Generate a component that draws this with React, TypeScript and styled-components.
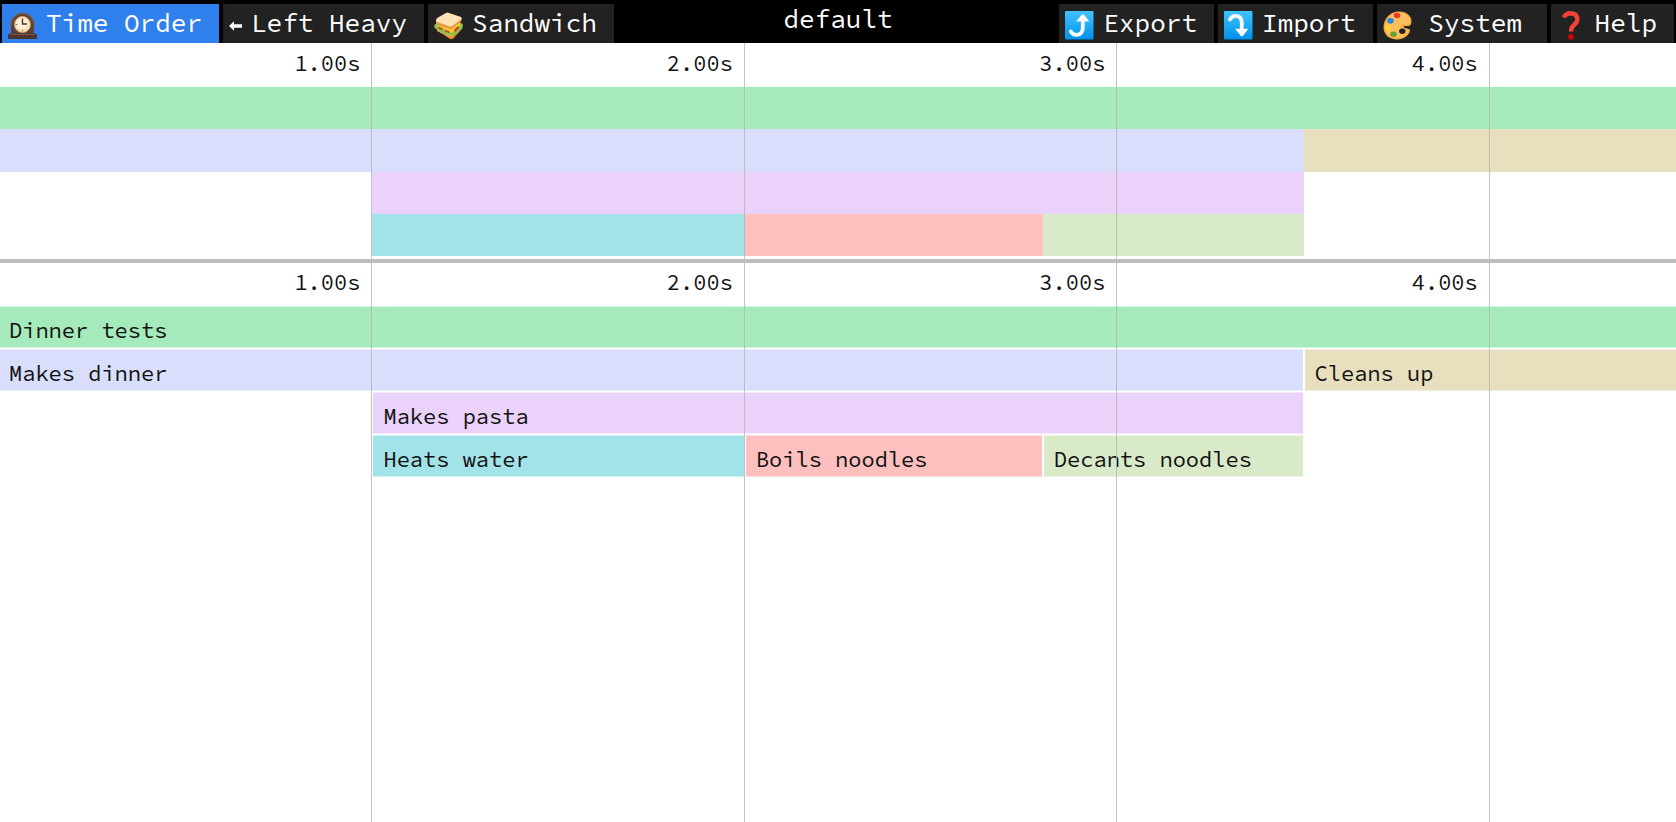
import React from "react";
import styled, { createGlobalStyle } from "styled-components";

const GlobalStyle = createGlobalStyle`
  * { box-sizing: border-box; }
  body {
    margin: 0;
    background: #fff;
    font-family: "Source Code Pro", "Noto Sans Mono", "Liberation Mono", monospace;
  }
`;

const Page = styled.div`
  display: flex;
  flex-direction: column;
  min-height: 100vh;
`;

const Toolbar = styled.header`
  display: grid;
  grid-template-columns: 1fr auto 1fr;
  padding: 0 2px;
  background: #000;
  color: #fff;
`;

const ToolGroup = styled.nav<{ $end?: boolean }>`
  display: flex;
  gap: 4px;
  padding-top: 4px;
  justify-content: ${(p) => (p.$end ? "flex-end" : "flex-start")};
`;

const Title = styled.h1`
  margin: 0;
  font-size: 26px;
  font-weight: 400;
  line-height: 38px;
`;

const ToolButton = styled.button<{ $active?: boolean; $wide?: boolean }>`
  display: flex;
  align-items: center;
  gap: 9px;
  height: 39px;
  min-width: ${(p) => (p.$wide ? "170px" : "0")};
  padding: 0 17px 2px 6px;
  border: 0;
  background: ${(p) => (p.$active ? "#2f80ed" : "#222")};
  color: #fff;
  font: inherit;
  font-size: 26px;
  line-height: 36px;
  white-space: nowrap;
  cursor: pointer;
  svg { flex: none; margin-top: 6px; }
`;

const ButtonLabel = styled.span`
  flex: 1;
  text-align: center;
`;

const Panel = styled.section<{ $fill?: boolean }>`
  position: relative;
  flex: ${(p) => (p.$fill ? "1" : "none")};
  padding: ${(p) => (p.$fill ? "43px 0 0" : "44px 0 3px")};
  border-bottom: ${(p) => (p.$fill ? "0" : "4px solid #bdbdbd")};
`;

const Axis = styled.div`
  position: absolute;
  inset: 0;
  display: grid;
  grid-template-columns: repeat(4, 2fr) 1fr;
  pointer-events: none;
`;

const Tick = styled.div<{ $detail?: boolean }>`
  padding: ${(p) => (p.$detail ? "3px" : "4px")} 11px 0 0;
  border-right: 1px solid rgba(180, 180, 180, 0.8);
  color: #111;
  font-size: 22px;
  line-height: 32px;
  text-align: right;
`;

const Rows = styled.div<{ $detail?: boolean }>`
  display: grid;
  grid-auto-rows: minmax(0, 1fr);
  height: ${(p) => (p.$detail ? "172px" : "169px")};
`;

const Row = styled.div<{ $detail?: boolean }>`
  display: flex;
  padding-bottom: ${(p) => (p.$detail ? "1px" : "0")};
`;

const Frame = styled.div<{ $color: string; $detail?: boolean; $first?: boolean; $last?: boolean }>`
  flex: none;
  overflow: hidden;
  padding-left: ${(p) => (p.$first ? "9px" : "10px")};
  border-style: solid;
  border-color: rgba(255, 255, 255, 0.5) #fff;
  border-top-width: ${(p) => (p.$detail ? "1px" : "0")};
  border-bottom-width: ${(p) => (p.$detail ? "1px" : "0")};
  border-left-width: ${(p) => (p.$detail && !p.$first ? "1px" : "0")};
  border-right-width: ${(p) => (p.$detail && !p.$last ? "1px" : "0")};
  background: ${(p) => p.$color};
  color: #111;
  font-size: 22px;
  line-height: 46px;
  white-space: nowrap;
`;

type Call = { name: string; start: number; end: number; color: string };

const TOTAL = 4.5;

const stacks: Call[][] = [
  [{ name: "Dinner tests", start: 0, end: 4.5, color: "#a4eabb" }],
  [
    { name: "Makes dinner", start: 0, end: 3.5, color: "#dadefd" },
    { name: "Cleans up", start: 3.5, end: 4.5, color: "#e7dfbe" },
  ],
  [{ name: "Makes pasta", start: 1, end: 3.5, color: "#ead2fa" }],
  [
    { name: "Heats water", start: 1, end: 2, color: "#a1e3e8" },
    { name: "Boils noodles", start: 2, end: 2.8, color: "#febfbf" },
    { name: "Decants noodles", start: 2.8, end: 3.5, color: "#d9eac9" },
  ],
];

const percent = (seconds: number) => `${(seconds / TOTAL) * 100}%`;

function FlameChart({ detail }: { detail?: boolean }) {
  return (
    <Panel $fill={detail} aria-label={detail ? "Flame chart" : "Minimap"}>
      <Rows $detail={detail}>
        {stacks.map((calls, depth) => (
          <Row key={depth} $detail={detail}>
            {calls.map((call, i) => (
              <Frame
                key={call.name}
                $color={call.color}
                $detail={detail}
                $first={call.start === 0}
                $last={call.end === TOTAL}
                style={{
                  marginLeft: percent(call.start - (i ? calls[i - 1].end : 0)),
                  width: percent(call.end - call.start),
                }}
              >
                {detail && call.name}
              </Frame>
            ))}
          </Row>
        ))}
      </Rows>
      <Axis>
        {[1, 2, 3, 4].map((s) => (
          <Tick key={s} $detail={detail}>{s.toFixed(2)}s</Tick>
        ))}
      </Axis>
    </Panel>
  );
}

const ClockIcon = () => (
  <svg width="29" height="28" viewBox="0 0 29 28" aria-hidden="true">
    <path d="M3 23V12.500a11.500 11.500 0 0 1 23 0V23z" fill="#5d4037" />
    <path d="M3 14a11.500 12.500 0 0 1 23 0" fill="none" stroke="#795548" strokeWidth="1.500" />
    <path d="M0 27v-4q0-1.500 2-1.500h25q2 0 2 1.500v4z" fill="#4e342e" />
    <path d="M2 22.500h25" stroke="#795548" />
    <circle cx="14.500" cy="12.500" r="8" fill="#ffe0b2" stroke="#c9a27a" />
    <circle cx="14" cy="11.500" r="6" fill="#fff0d5" />
    <path d="M14.500 6.500v5.500H19" fill="none" stroke="#4e342e" strokeWidth="1.400" />
    <path d="M14.500 17.500v2M7.500 12.500h2" stroke="#9c7957" />
  </svg>
);

const LeftArrowIcon = () => (
  <svg width="13" height="10" viewBox="0 0 13 10" aria-hidden="true">
    <path d="M0 5L5 .3V3.300H13V6.700H5V9.700z" fill="#fff" />
  </svg>
);

const SandwichIcon = () => (
  <svg width="29" height="28" viewBox="0 0 29 28" aria-hidden="true">
    <path d="M3 18l13 9q2 .8 3.500-.5L27 18l-10-6z" fill="#d9822b" />
    <path d="M3 19l14 7 9-9v-3L3 16z" fill="#f0a64a" />
    <path d="M0 14q1-3 4-2l13 6 10-7q3 1 1.500 4 0 3-2.500 3-1 0-2 3-2 1-3 0-1 3-4 2-3 1-4-1-3 1-5-2-2 1-3-2-4 0-5-4z" fill="#8bc34a" />
    <path d="M2 13l16 8 9-9-1-2-8 6z" fill="#ffca28" />
    <path d="M4 15l4 1 1 2-4-1zM10 18l5 1 1 2-4-1zM20 18l4-4 1 2-4 4z" fill="#d32f2f" />
    <path d="M2 8v4l15 5.500L27.500 9V6z" fill="#e59a45" />
    <path d="M2 8q0-1.500 2-2.500L12 1q1.500-.8 3 0l12 4q1.500 1 0 2.500L18 14q-1 .8-2.500.3L3 10q-1-.5-1-2z" fill="#ffe3b5" />
  </svg>
);

const BlueTile = ({ children, id }: { children: React.ReactNode; id: string }) => (
  <svg width="29" height="29" viewBox="0 0 29 29" aria-hidden="true">
    <defs>
      <linearGradient id={id} x1="0" y1="0" x2="0" y2="1">
        <stop offset="0" stopColor="#40c4ff" />
        <stop offset="1" stopColor="#0091ea" />
      </linearGradient>
    </defs>
    <rect width="28.500" height="28.500" rx="1" fill={`url(#${id})`} />
    {children}
  </svg>
);

const ExportIcon = () => (
  <BlueTile id="export-tile">
    <path d="M5.800 20.500q2 3.500 6 3.300 6-.4 6-7V9" fill="none" stroke="#fafafa" strokeWidth="3.800" strokeLinecap="round" />
    <path d="M11 10.500L16.700 3.800q1.200-1.200 2.400 0l5.200 6.700z" fill="#fafafa" />
  </BlueTile>
);

const ImportIcon = () => (
  <BlueTile id="import-tile">
    <path d="M6 8.500q2-4 6-3.700 5.800.4 5.800 7V19" fill="none" stroke="#fafafa" strokeWidth="3.800" strokeLinecap="round" />
    <path d="M11 17.800L16.700 24.800q1.200 1.200 2.400 0l5.200-7z" fill="#fafafa" />
  </BlueTile>
);

const PaletteIcon = () => (
  <svg width="29" height="29" viewBox="0 0 29 29" aria-hidden="true">
    <path d="M16 0.500C24 .5 29 5.500 28.500 11c-.3 4-3 4.500-6 4-2-.3-2.500 1-.5 2 3 1 5 .5 5 2.500 0 4-6 9-13 9C6 28.500.5 23.500.5 16.500.5 7.500 7 .5 16 .5z" fill="#f4a940" />
    <path d="M16 1.500c7 0 11.500 4.500 11 9.500-.3 3-2.500 3-5 2.500-4-.5-5 3-1 4.500 2 .8 4.500 0 4.500 1.500 0 3-5 7.500-11.500 7.500C7 27 2 22.500 2 16.500 2 8.500 8 1.500 16 1.500z" fill="#ffbd5c" />
    <ellipse cx="14" cy="4.500" rx="3.300" ry="2.700" fill="#e53935" />
    <ellipse cx="7.500" cy="9.700" rx="3.300" ry="2.800" fill="#1e88e5" />
    <ellipse cx="5" cy="16.700" rx="2.900" ry="2.800" fill="#fdd835" />
    <ellipse cx="10.500" cy="23.300" rx="3.300" ry="2.700" fill="#689f38" />
    <ellipse cx="19.300" cy="20.300" rx="3.200" ry="2.700" fill="#222" />
  </svg>
);

const QuestionIcon = () => (
  <svg width="29" height="29" viewBox="0 0 29 29" aria-hidden="true">
    <path d="M7 6.500q1.500-4.300 6.500-4.300 6.800.3 6.800 6 0 3.300-3.300 5.800-3 2.300-3 6.500" fill="none" stroke="#f44336" strokeWidth="4.400" />
    <circle cx="14" cy="25.800" r="2.900" fill="#d50000" />
  </svg>
);

export default function App() {
  return (
    <>
      <GlobalStyle />
      <Page>
        <Toolbar>
          <ToolGroup aria-label="Views">
            <ToolButton type="button" $active aria-pressed="true">
              <ClockIcon />
              <ButtonLabel>Time Order</ButtonLabel>
            </ToolButton>
            <ToolButton type="button">
              <LeftArrowIcon />
              <ButtonLabel>Left Heavy</ButtonLabel>
            </ToolButton>
            <ToolButton type="button">
              <SandwichIcon />
              <ButtonLabel>Sandwich</ButtonLabel>
            </ToolButton>
          </ToolGroup>
          <Title>default</Title>
          <ToolGroup $end aria-label="Actions">
            <ToolButton type="button">
              <ExportIcon />
              <ButtonLabel>Export</ButtonLabel>
            </ToolButton>
            <ToolButton type="button">
              <ImportIcon />
              <ButtonLabel>Import</ButtonLabel>
            </ToolButton>
            <ToolButton type="button" $wide>
              <PaletteIcon />
              <ButtonLabel>System</ButtonLabel>
            </ToolButton>
            <ToolButton type="button">
              <QuestionIcon />
              <ButtonLabel>Help</ButtonLabel>
            </ToolButton>
          </ToolGroup>
        </Toolbar>
        <FlameChart />
        <FlameChart detail />
      </Page>
    </>
  );
}
